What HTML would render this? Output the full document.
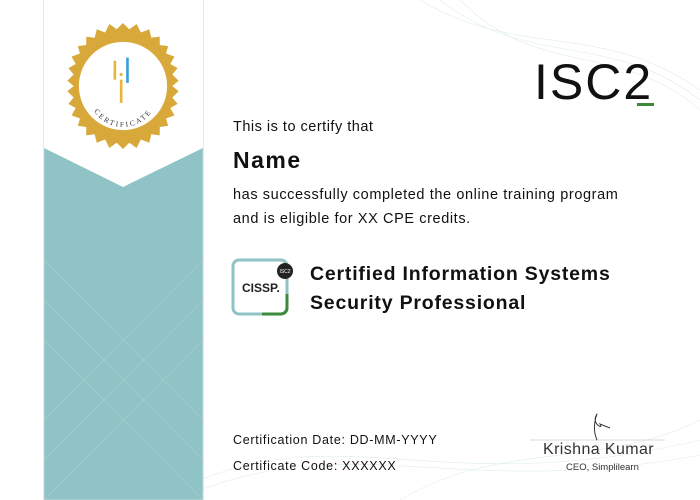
<!DOCTYPE html>
<html><head><style>
body{margin:0;width:700px;height:500px;background:#fff;position:relative;overflow:hidden;font-family:"Liberation Sans",sans-serif;color:#111}
.t{position:absolute;white-space:nowrap}
</style></head><body>
<svg width="700" height="500" style="position:absolute;left:0;top:0">
  <g fill="none" stroke="#d6e8ea" stroke-width="0.6" opacity="0.8">
    <path d="M420 0 C520 60 600 20 700 90"/><path d="M440 0 C530 70 610 30 700 100"/><path d="M460 0 C540 80 620 40 700 110"/>
    <path d="M200 480 C350 420 450 500 700 440"/><path d="M200 490 C360 430 460 500 700 455"/><path d="M400 500 C500 440 600 470 700 420"/>
  </g>
  <rect x="44" y="0" width="159" height="500" fill="#8fc3c5"/>
  <rect x="44" y="0" width="159" height="500" fill="none" stroke="#b9d7d9" stroke-width="1"/>
  <polygon points="44,0 203,0 203,148 123,187 44,148" fill="#fff"/>
  <g fill="none" stroke="#a9d0d2" stroke-width="0.6">
    <path d="M44 260 L203 420"/><path d="M44 300 L203 460"/><path d="M44 340 L203 500"/><path d="M203 260 L44 420"/><path d="M203 300 L44 460"/><path d="M203 340 L44 500"/>
  </g>
  <g transform="translate(123,86) scale(1.05)">
    <polygon fill="#d8a93a" points="
      0,-60 6,-54 13,-59 17,-51 25,-54 27,-46 35,-47 35,-39 43,-38 41,-31 49,-28 45,-21 52,-17 47,-11 53,-5 47,0 53,5 47,11 52,17 45,21 49,28 41,31 43,38 35,39 35,47 27,46 25,54 17,51 13,59 6,54 0,60 -6,54 -13,59 -17,51 -25,54 -27,46 -35,47 -35,39 -43,38 -41,31 -49,28 -45,21 -52,17 -47,11 -53,5 -47,0 -53,-5 -47,-11 -52,-17 -45,-21 -49,-28 -41,-31 -43,-38 -35,-39 -35,-47 -27,-46 -25,-54 -17,-51 -13,-59 -6,-54"/>
    <circle r="42" fill="#fff"/>
    <rect x="-9" y="-24" width="2.5" height="18" fill="#e8b43a"/>
    <rect x="-3" y="-6" width="2.5" height="22" fill="#e8b43a"/>
    <rect x="3" y="-27" width="2.5" height="24" fill="#3aa0d8"/>
    <circle cx="-1.8" cy="-11" r="1.5" fill="#e8b43a"/>
    <path id="arc" d="M-33,6 A33,33 0 0 0 33,6" fill="none"/>
    <text font-family="Liberation Serif,serif" font-size="7" letter-spacing="2" fill="#333"><textPath href="#arc" startOffset="50%" text-anchor="middle">CERTIFICATE</textPath></text>
  </g>
  <rect x="233" y="260" width="54" height="54" rx="6" fill="none" stroke="#8fc3c5" stroke-width="3"/>
  <path d="M287 294 V308 a6 6 0 0 1 -6 6 H262" fill="none" stroke="#3c8a3c" stroke-width="3"/>
  <circle cx="285" cy="271" r="8" fill="#222"/>
  <text x="285" y="273" font-size="5" fill="#fff" text-anchor="middle" font-family="Liberation Sans">ISC2</text>
  <text x="242" y="292" font-size="12" font-weight="bold" fill="#222" font-family="Liberation Sans">CISSP.</text>
  <rect x="637" y="103" width="17" height="3" fill="#3c8a3c"/>
  <line x1="530" y1="440" x2="665" y2="440" stroke="#ccc" stroke-width="0.8"/>
  <path d="M597 440 C590 425 600 408 596 416 C592 424 604 430 600 424 L610 428" fill="none" stroke="#333" stroke-width="1"/>
</svg>
<div class="t" style="left:534px;top:52px;font-size:50px;letter-spacing:2px;color:#111;line-height:60px">ISC2</div>
<div class="t" style="left:233px;top:119px;font-size:14.5px;letter-spacing:0.5px">This is to certify that</div>
<div class="t" style="left:233px;top:147px;font-size:23px;font-weight:bold;letter-spacing:1.5px">Name</div>
<div class="t" style="left:233px;top:187px;font-size:14.5px;letter-spacing:0.6px">has successfully completed the online training program</div>
<div class="t" style="left:233px;top:211px;font-size:14.5px;letter-spacing:0.6px">and is eligible for XX CPE credits.</div>
<div class="t" style="left:310px;top:260px;font-size:19.5px;font-weight:bold;line-height:29px;letter-spacing:0.8px">Certified Information Systems<br>Security Professional</div>
<div class="t" style="left:233px;top:433px;font-size:12.5px;letter-spacing:0.7px">Certification Date: DD-MM-YYYY</div>
<div class="t" style="left:233px;top:459px;font-size:12.5px;letter-spacing:0.7px">Certificate Code: XXXXXX</div>
<div class="t" style="left:543px;top:441px;font-size:16px;letter-spacing:0.4px;color:#333">Krishna Kumar</div>
<div class="t" style="left:566px;top:462px;font-size:9.5px;color:#333">CEO, Simplilearn</div>
</body></html>
